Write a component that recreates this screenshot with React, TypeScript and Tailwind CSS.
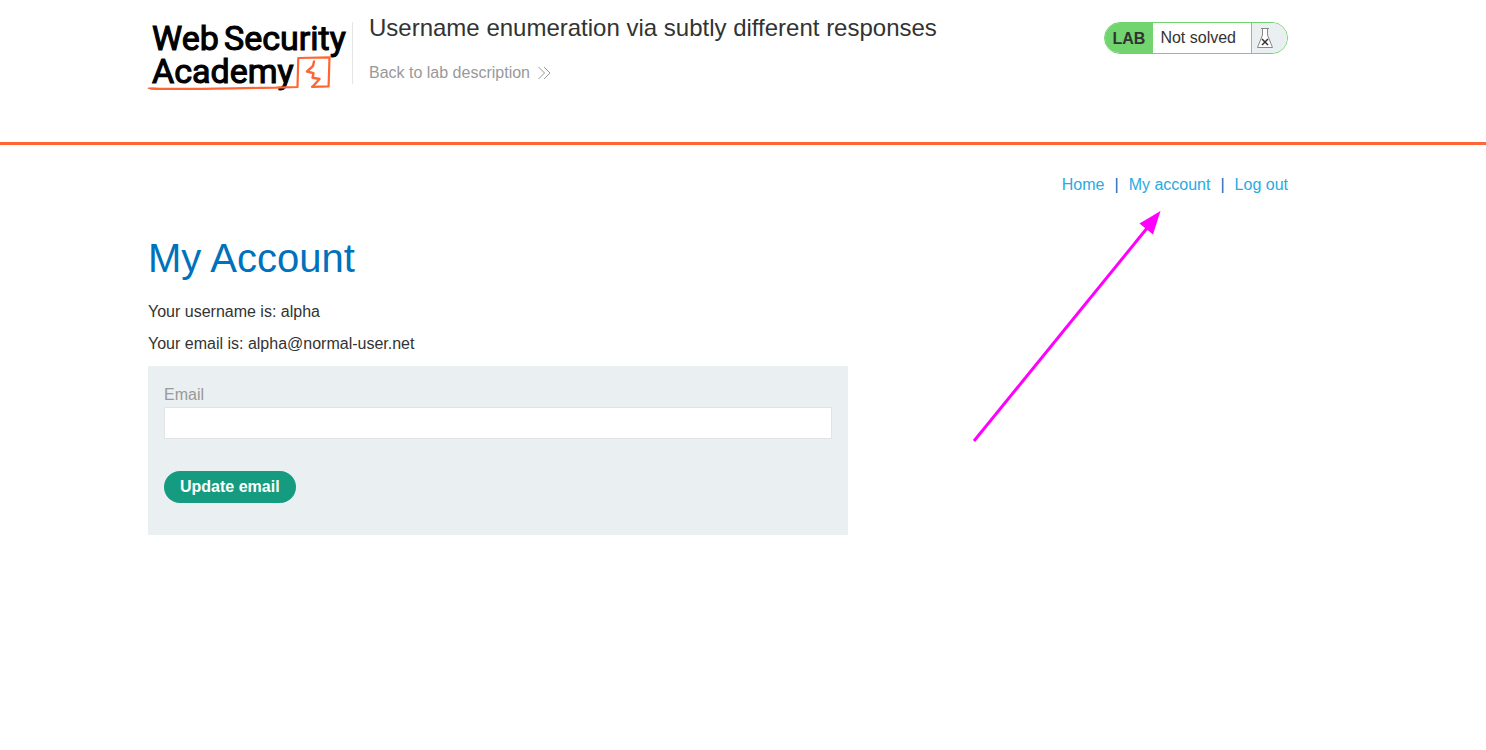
function Logo() {
  return (
    <a href="#academy" aria-label="Web Security Academy" className="block shrink-0">
      <svg width="204" height="74" viewBox="0 0 204 74" className="block overflow-visible">
        <g fill="#000" stroke="#000" strokeWidth="1.1" className="font-['Roboto',sans-serif] text-[34px] font-normal">
          <text x="4" y="28">Web</text>
          <text x="76" y="28">Security</text>
          <text x="4" y="61">Academy</text>
        </g>
        <g fill="none" stroke="#ff6633" strokeLinecap="round" strokeLinejoin="round">
          <path d="M3 66.6C35 67.6 80 66.2 128 65.7L149.500 65L150.300 36L181.500 35.300L180.600 64.400L164 64.800" strokeWidth="2.200" />
          <path d="M0.500 66.300L20 67.200L60 66.800" strokeWidth="1.600" />
          <path d="M166 39.500L165 44L159 49.500L165.500 51.200L164.500 55.700L171.500 57L164.500 64.700" strokeWidth="2.400" />
        </g>
      </svg>
    </a>
  );
}

function Flask() {
  return (
    <svg width="18" height="22" viewBox="0 0 18 22" role="img" aria-label="Not solved" className="block">
      <path d="M6.500 1.500V8L1.500 20.500H16.500L11.500 8V1.500Z" fill="#fff" stroke="#888" />
      <path d="M5 1.500H13" stroke="#888" />
      <path d="M6 12L12 18M12 12L6 18" stroke="#333" strokeWidth="1.500" />
    </svg>
  );
}

function LabStatus() {
  return (
    <div className="flex h-8 shrink-0 overflow-hidden rounded-full border border-[#72d46e] bg-white leading-[30px]">
      <span className="bg-[#72d46e] px-2 pt-px font-bold">LAB</span>
      <p className="pl-[7px] pr-[15px]">Not solved</p>
      <span className="flex w-9 items-center border-l border-[#72d46e] bg-[#eaeff2] pl-1">
        <Flask />
      </span>
    </div>
  );
}

function Header() {
  return (
    <header className="border-b-[3px] border-[#ff6633]">
      <div className="mx-auto flex min-h-[142px] max-w-[1190px] items-start pr-[50px] pt-[22px]">
        <Logo />
        <div className="flex h-[62px] flex-1 flex-col items-start border-l border-[#e5e5e5] pl-4">
          <h2 className="-mt-2 text-2xl leading-7">Username enumeration via subtly different responses</h2>
          <a href="#description" className="mt-[19px] flex items-center gap-2 leading-6 text-[#999]">
            Back to lab description
            <svg width="13" height="14" viewBox="0 0 13 14" fill="none" stroke="#999" aria-hidden="true">
              <path d="M0.500 1L6.500 7L0.500 13M6 1L12 7L6 13" />
            </svg>
          </a>
        </div>
        <LabStatus />
      </div>
    </header>
  );
}

function Arrow() {
  return (
    <svg width="190" height="234" viewBox="0 0 190 234" aria-hidden="true" className="pointer-events-none absolute right-[176px] top-[64px]">
      <path d="M2 232L176 18" stroke="#ff00ff" strokeWidth="3" />
      <path d="M188.500 2L167.500 14.500L181 25.500Z" fill="#ff00ff" />
    </svg>
  );
}

export default function App() {
  return (
    <div className="min-h-screen bg-white font-['Liberation_Sans',Arial,sans-serif] text-base text-[#333332]">
      <Header />
      <main className="relative mx-auto max-w-[1190px] pr-[50px] pt-7">
        <nav className="flex justify-end gap-[10px] leading-6 text-[#29aae2]">
          <a href="#home">Home</a>
          <span className="text-[#0071bb]">|</span>
          <a href="#account">My account</a>
          <span className="text-[#0071bb]">|</span>
          <a href="#logout">Log out</a>
        </nav>
        <h1 className="mt-9 text-[40px] leading-[50px] text-[#0071bb]">My Account</h1>
        <p className="mt-[13px] leading-8">Your username is: alpha</p>
        <p className="leading-8">Your email is: alpha@normal-user.net</p>
        <form className="mt-[6px] max-w-[700px] bg-[#eaeff2] px-4 pb-8 pt-[17px]" onSubmit={(e) => e.preventDefault()}>
          <label htmlFor="email" className="block leading-6 text-[#999]">Email</label>
          <input id="email" type="email" className="block h-8 w-full border border-[#e3e3e6] bg-white px-2 outline-none" />
          <button type="submit" className="mt-8 block h-8 rounded-full bg-[#159c80] px-4 font-bold text-white">Update email</button>
        </form>
        <Arrow />
      </main>
    </div>
  );
}
